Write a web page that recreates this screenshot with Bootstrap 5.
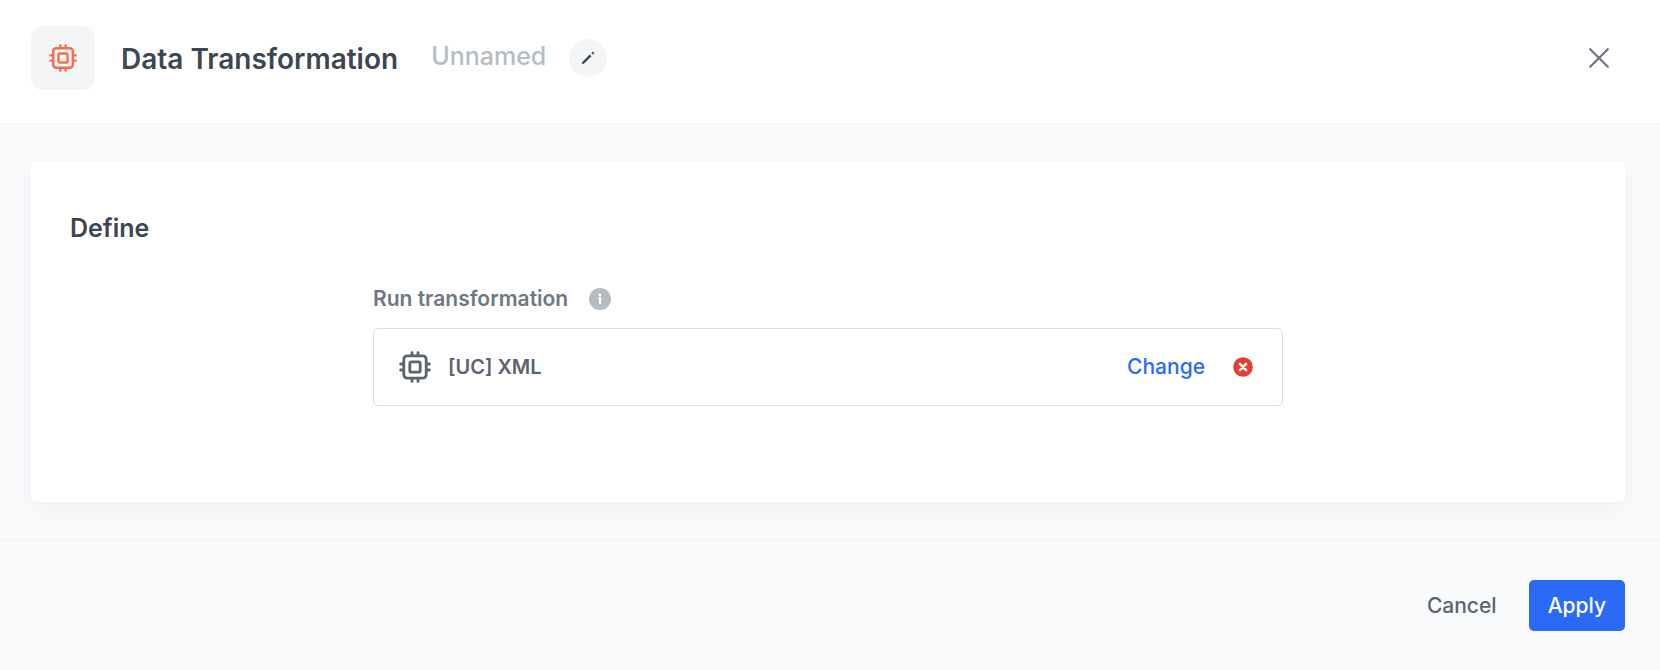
<!DOCTYPE html>
<html lang="en">
<head>
<meta charset="utf-8">
<meta name="viewport" content="width=device-width, initial-scale=1">
<title>Data Transformation</title>
<link href="https://cdn.jsdelivr.net/npm/bootstrap@5.3.0/dist/css/bootstrap.min.css" rel="stylesheet">
<style>
  body { font-family: Inter, "Liberation Sans", sans-serif; font-size: 21px; line-height: 30px; font-weight: 500; color: #5b6470; background: #f9fafc; }
  svg { display: block; flex: none; }
  .btn-bare { border: 0; background: none; padding: 0; }
  .step-header { padding: 26px 35px 33px 31px; border-bottom: 1px solid #eff1f4; }
  .step-tile { width: 64px; height: 64px; margin-right: 26px; border-radius: 12px; background: #f3f5f7; color: #f0704f; }
  .step-title { font-size: 28px; line-height: 36px; font-weight: 600; color: #3d4653; margin-right: 33px; padding-top: 2px; }
  .step-name { font-size: 25px; line-height: 32px; color: #b5bcc2; margin-right: 23px; padding-bottom: 4px; }
  .edit-btn { width: 38px; height: 38px; background: #f3f5f7; color: #343c48; }
  .close-btn { padding: 8px 16px; color: #6b7583; }
  .step-body { padding: 38px 35px 38px 31px; }
  .define-card { border-radius: 5px; padding: 48px 39px 96px; box-shadow: 0 6px 24px rgba(40, 50, 60, .045); }
  .define-title { font-size: 25px; line-height: 36px; font-weight: 600; color: #3d4653; margin-bottom: 38px; }
  .field-group { max-width: 910px; }
  .field-head { margin-bottom: 14px; }
  .field-label { font-weight: 600; color: #6e7783; margin-right: 21px; }
  .info-btn { color: #b5bcc2; }
  .picked { border: 1px solid #dcdfe3; border-radius: 5px; padding: 22px 29px 22px 25px; min-height: 78px; }
  .picked-name { font-size: 20px; font-weight: 600; margin-left: 17px; }
  .change-link { color: #2a6af7; margin-right: 28px; }
  .step-footer { border-top: 1px solid #eff1f4; padding: 39px 35px 39px 31px; gap: 13px; }
  .step-footer .btn { font-size: 21px; line-height: 30px; font-weight: 500; padding: 11px 19px 10px; border: 0; border-radius: 5px; }
  .cancel-btn { color: #5b6470; }
  .apply-btn { background: #2a6af7; color: #fff; }
  .step-footer .apply-btn:hover { background: #1f5be0; color: #fff; }
</style>
</head>
<body>
<svg width="0" height="0" class="d-none" aria-hidden="true">
  <symbol id="chip" viewBox="0 0 32 32">
    <g fill="none" stroke="currentColor" stroke-width="2.800" stroke-linecap="round">
      <rect x="4.800" y="4.800" width="22.400" height="22.400" rx="3.400"/>
      <rect x="10.800" y="10.800" width="10.400" height="10.400" rx="1.800"/>
      <path d="M13 4.400V1.600M19 4.400V1.600M13 27.600V30.400M19 27.600V30.400M4.400 13H1.600M4.400 19H1.600M27.600 13H30.400M27.600 19H30.400"/>
    </g>
  </symbol>
</svg>

<header class="step-header bg-white d-flex align-items-center">
  <div class="step-tile d-flex align-items-center justify-content-center">
    <svg width="28" height="28" aria-hidden="true"><use href="#chip"/></svg>
  </div>
  <h1 class="step-title mb-0">Data Transformation</h1>
  <span class="step-name">Unnamed</span>
  <button type="button" class="btn-bare edit-btn rounded-circle d-flex align-items-center justify-content-center" aria-label="Edit name">
    <svg width="14" height="14" viewBox="0 0 14 14" aria-hidden="true">
      <path d="M1.200 12.800l.2-1.600L8.800 3.800l1.400 1.400L2.800 12.600z" fill="currentColor" stroke="currentColor" stroke-width=".5" stroke-linejoin="round"/>
      <path d="M10.700 2.200l.9-.9q.5-.4 1 0l.1.100q.4.500 0 1l-.9.900z" fill="currentColor" stroke="currentColor" stroke-width=".5"/>
    </svg>
  </button>
  <button type="button" class="btn-bare close-btn ms-auto" aria-label="Close">
    <svg width="20" height="20" viewBox="0 0 20 20" aria-hidden="true"><path d="M1.200 1.200l17.600 17.600M18.800 1.200L1.200 18.800" stroke="currentColor" stroke-width="2.200" stroke-linecap="round"/></svg>
  </button>
</header>

<main class="step-body">
  <section class="define-card bg-white">
    <h2 class="define-title">Define</h2>
    <div class="field-group mx-auto">
      <div class="field-head d-flex align-items-center">
        <span class="field-label" id="run-label">Run transformation</span>
        <button type="button" class="btn-bare info-btn" aria-label="About this field">
          <svg width="22" height="22" viewBox="0 0 22 22" aria-hidden="true">
            <circle cx="11" cy="11" r="11" fill="currentColor"/>
            <circle cx="10.800" cy="7" r="1.400" fill="#fff"/>
            <path d="M9.300 9.200h2.900v6.900h-2.200v-5.400h-.7z" fill="#fff"/>
          </svg>
        </button>
      </div>
      <div class="picked d-flex align-items-center" role="group" aria-labelledby="run-label">
        <svg width="32" height="32" aria-hidden="true"><use href="#chip"/></svg>
        <span class="picked-name">[UC] XML</span>
        <a href="#" class="change-link text-decoration-none ms-auto">Change</a>
        <button type="button" class="btn-bare" aria-label="Remove transformation">
          <svg width="20" height="20" viewBox="0 0 20 20" aria-hidden="true">
            <circle cx="10" cy="10" r="9.800" fill="#e23f32"/>
            <path d="M6.900 6.900l6.200 6.200M13.100 6.900l-6.200 6.200" stroke="#fff" stroke-width="2.500" stroke-linecap="round"/>
          </svg>
        </button>
      </div>
    </div>
  </section>
</main>

<footer class="step-footer d-flex justify-content-end">
  <button type="button" class="btn cancel-btn">Cancel</button>
  <button type="button" class="btn apply-btn">Apply</button>
</footer>
<script src="https://cdn.jsdelivr.net/npm/bootstrap@5.3.0/dist/js/bootstrap.bundle.min.js"></script>
</body>
</html>
